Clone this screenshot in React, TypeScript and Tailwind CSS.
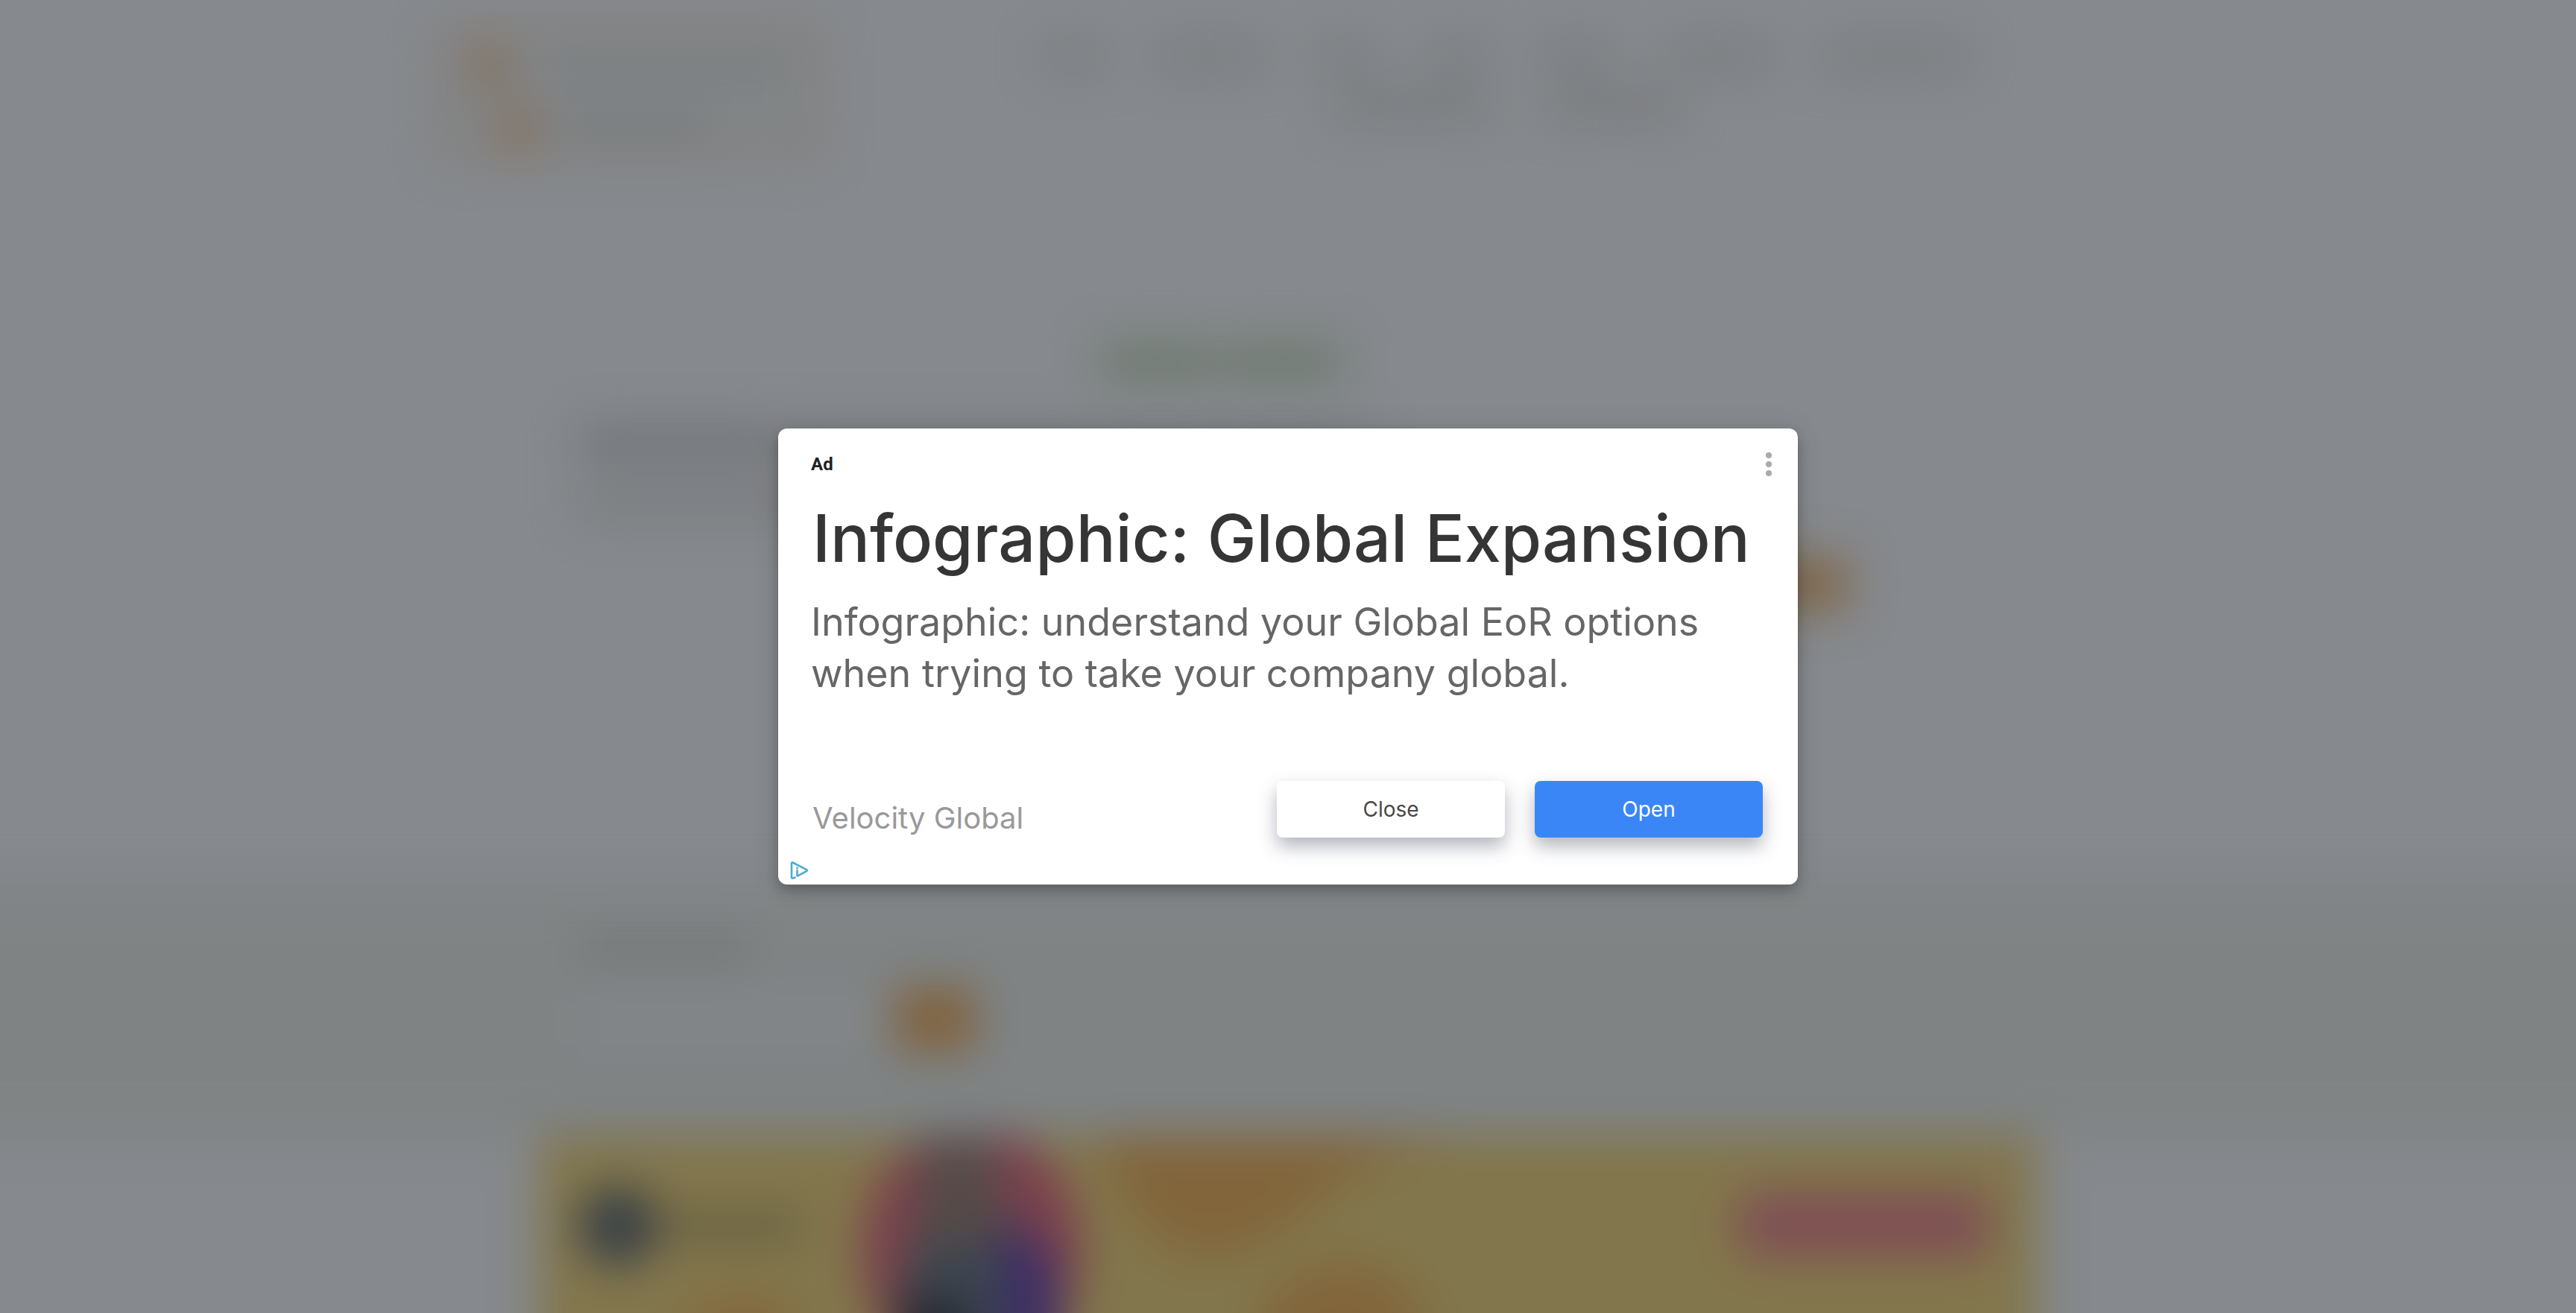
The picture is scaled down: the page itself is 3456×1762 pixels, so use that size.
const primaryNav = [
  'w-20',
  'w-36',
  'w-20',
  'w-20',
  'w-24',
  'w-36',
  'w-48',
];

function PageHeader() {
  return (
    <div className="mx-auto flex w-full max-w-[2276px] items-start justify-between pt-9">
      <div className="flex h-44 w-[510px] flex-col gap-5 rounded-lg border-8 border-[#85796f] bg-[#828587] px-8 pt-3">
        <div className="flex items-center gap-12">
          <div className="h-16 w-14 bg-[#857464]" />
          <div className="h-9 w-[340px] bg-[#7a7e80]" />
        </div>
        <div className="flex items-center gap-8 pl-9">
          <div className="h-16 w-14 bg-[#857464]" />
          <div className="h-9 w-[200px] bg-[#787c7e]" />
        </div>
      </div>
      <div className="flex w-[1466px] flex-col gap-8 pt-6 pr-[226px]">
        <div className="flex justify-between">
          {primaryNav.map((width, index) => (
            <div key={index} className={`h-8 bg-[#777a7d] ${width}`} />
          ))}
        </div>
        <div className="flex gap-20 pl-[390px]">
          <div className="h-8 w-52 bg-[#75777a]" />
          <div className="h-8 w-44 bg-[#75777a]" />
        </div>
      </div>
    </div>
  );
}

function PageBody() {
  return (
    <div className="mx-auto flex w-full max-w-[2014px] flex-col px-14 pt-[248px]">
      <div className="ml-[696px] flex gap-2">
        <div className="h-[52px] w-40 bg-[#6f7a70]" />
        <div className="h-[52px] w-40 bg-[#6f7a70]" />
      </div>
      <div className="mt-[60px] flex flex-col gap-9">
        <div className="flex gap-2">
          <div className="h-11 w-[270px] bg-[#717478]" />
          <div className="h-11 w-[780px] bg-[#7b7d81]" />
        </div>
        <div className="h-10 w-[400px] bg-[#797b7e]" />
      </div>
      <div className="mt-14 mr-[200px] h-[72px] w-[180px] self-end bg-[#80684a]" />
    </div>
  );
}

function SearchBand() {
  return (
    <div className="-mx-24 mt-[370px] h-[334px] bg-[#7f8384] px-24">
      <div className="mx-auto flex w-full max-w-[2014px] flex-col px-14">
        <div className="mt-[66px] h-9 w-[230px] bg-[#757879]" />
        <div className="mt-8 flex items-center gap-6">
          <div className="h-16 w-[400px] bg-[#838689]" />
          <div className="h-[88px] w-[108px] bg-[#80633f]" />
        </div>
      </div>
    </div>
  );
}

function Banner() {
  return (
    <div className="mx-auto w-full max-w-[2008px]">
      <svg
        viewBox="0 0 2014 420"
        className="block w-full overflow-hidden bg-[#82764c]"
        aria-hidden="true"
      >
        <circle cx="105" cy="122" r="54" fill="#3a4146" />
        <rect x="166" y="100" width="186" height="44" fill="#696243" />
        <circle cx="272" cy="300" r="84" fill="#85673c" />
        <ellipse cx="581" cy="156" rx="148" ry="168" fill="#7b3f4e" />
        <path
          d="M520 0h84l26 100 50 60 22 90-20 170H484l-10-190 28-110z"
          fill="#554b48"
        />
        <path d="M620 110l60 40 22 80-20 190h-96z" fill="#3b2f66" />
        <path d="M500 170l60-40 60 50 10 260H490z" fill="#3c454f" />
        <path d="M484 220l70 0 40 60v140H480z" fill="#23262e" />
        <path
          d="M752 0h480c-90 20-140 42-190 90-60 62-130 88-190 60-50-24-76-90-100-150z"
          fill="#82653b"
        />
        <circle cx="1080" cy="290" r="118" fill="#82653b" />
        <rect x="1612" y="76" width="340" height="88" rx="30" fill="#7f4f54" />
      </svg>
    </div>
  );
}

function Backdrop() {
  return (
    <div
      className="absolute inset-0 overflow-hidden bg-[#86898d]"
      aria-hidden="true"
    >
      <div className="blur-[30px]">
        <PageHeader />
        <PageBody />
        <SearchBand />
        <Banner />
      </div>
    </div>
  );
}

function AdChoicesIcon() {
  return (
    <svg viewBox="0 0 24 24" className="h-6 w-6" fill="none" aria-hidden="true">
      <path
        d="M6.500 21.500 3.600 22.600c-.9.300-1.600-.3-1.600-1.100V2.500c0-.9.800-1.400 1.600-1L22.300 11.200c.7.400.7 1.200 0 1.600L10.500 19.300"
        stroke="#4badcf"
        strokeWidth="2.600"
        strokeLinejoin="round"
        strokeLinecap="round"
      />
      <circle cx="9.500" cy="8.700" r="1.500" fill="#4badcf" />
      <path d="M9.500 12v7" stroke="#4badcf" strokeWidth="2.600" strokeLinecap="round" />
    </svg>
  );
}

export default function App() {
  return (
    <div className="relative flex h-screen items-center justify-center overflow-hidden font-['Inter',sans-serif]">
      <Backdrop />
      <main
        role="dialog"
        aria-labelledby="ad-title"
        className="relative w-full max-w-[1368px] rounded-xl bg-white pt-6 pr-[47px] pb-[63px] pl-11 shadow-[0_8px_16px_rgba(0,0,0,0.24),0_2px_40px_rgba(0,0,0,0.10)]"
      >
        <div className="flex h-12 items-center justify-between">
          <span className="font-['Roboto',sans-serif] text-2xl font-bold text-[#202124]">
            Ad
          </span>
          <button
            type="button"
            aria-label="More options"
            className="-mr-8 flex h-12 w-12 flex-col items-center justify-center gap-1"
          >
            <span className="h-2 w-2 rounded-full bg-[#a9a9ad]" />
            <span className="h-2 w-2 rounded-full bg-[#a9a9ad]" />
            <span className="h-2 w-2 rounded-full bg-[#a9a9ad]" />
          </button>
        </div>
        <h1
          id="ad-title"
          className="mt-7 pl-0.5 text-[88px] leading-[94px] font-medium whitespace-nowrap text-[#353535]"
        >
          Infographic: Global Expansion
        </h1>
        <p className="mt-[31px] text-[52px] leading-[69px] text-[#666666]">
          Infographic: understand your Global EoR options
          <br />
          when trying to take your company global.
        </p>
        <div className="mt-[110px] flex items-end justify-between">
          <span className="mb-0.5 pl-0.5 text-[40px] leading-[48px] text-[#999999]">
            Velocity Global
          </span>
          <div className="flex gap-10">
            <button
              type="button"
              className="h-[76px] w-[306px] rounded-lg bg-white text-[28px] text-[#4a4747] shadow-[0_12px_24px_rgba(60,64,90,0.38)]"
            >
              Close
            </button>
            <button
              type="button"
              className="h-[76px] w-[306px] rounded-lg bg-[#3b86f7] text-[28px] text-white shadow-[0_12px_24px_rgba(60,64,80,0.38)]"
            >
              Open
            </button>
          </div>
        </div>
        <a
          href="#adchoices"
          aria-label="AdChoices"
          className="absolute bottom-[7px] left-4"
        >
          <AdChoicesIcon />
        </a>
      </main>
    </div>
  );
}
